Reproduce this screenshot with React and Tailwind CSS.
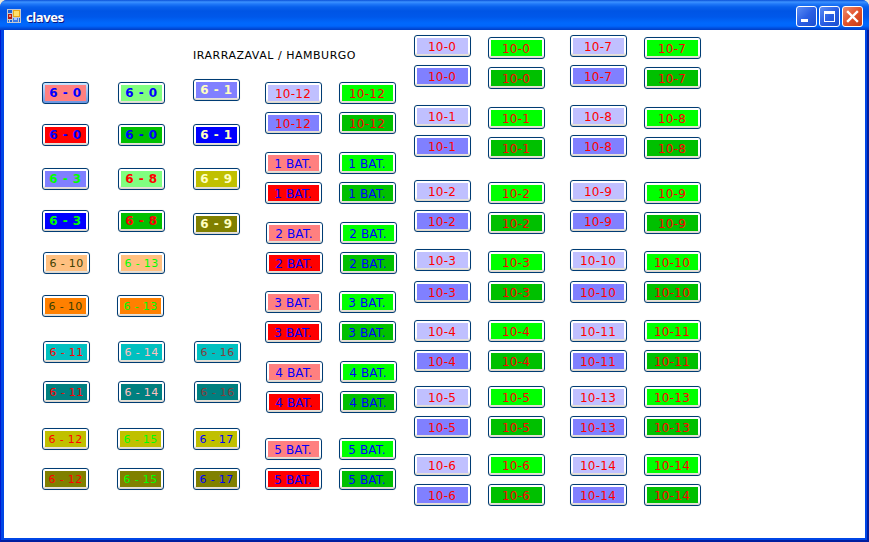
const RED = "text-[#ff0000]";
const BLUE = "text-[#0000ff]";
const LIME = "text-[#00ff00]";
const CREAM = "text-[#ffffc0]";
const OLIVE = "text-[#404000]";
const PINK = "text-[#ffc0c0]";
const BROWN = "text-[#804040]";

const SALMON_BG = "bg-[#ff8080]";
const RED_BG = "bg-[#ff0000]";
const LIME_BG = "bg-[#00ff00]";
const GREEN_BG = "bg-[#00c000]";
const MINT_BG = "bg-[#80ff80]";
const LAVENDER_BG = "bg-[#c0c0ff]";
const PERI_BG = "bg-[#8080ff]";
const BLUE_BG = "bg-[#0000ff]";
const MUSTARD_BG = "bg-[#c0c000]";
const OLIVE_BG = "bg-[#808000]";
const PEACH_BG = "bg-[#ffc080]";
const ORANGE_BG = "bg-[#ff8000]";
const CYAN_BG = "bg-[#00c0c0]";
const TEAL_BG = "bg-[#008080]";

const BOLD = "w-[47px] text-[12px] font-bold tracking-[0.45px]";
const SMALL = "w-[47px] text-[11px] tracking-[0.35px]";
const CODE = "w-[57px] text-[12px] tracking-[0.25px] *:pt-[2px] *:pr-px";
const BAT = "w-[57px] text-[12px] tracking-[0.1px] *:pt-[2px] *:pr-px";

// Each entry: label, size style, fill, text colour, spacing
const first = [
  ["6 - 0", BOLD, SALMON_BG, BLUE, "mt-[3px]", true],
  ["6 - 0", BOLD, RED_BG, BLUE, "mt-5"],
  ["6 - 3", BOLD, PERI_BG, LIME, "mt-[22px]"],
  ["6 - 3", BOLD, BLUE_BG, LIME, "mt-5"],
  ["6 - 10", SMALL, PEACH_BG, OLIVE, "mt-5 ml-px"],
  ["6 - 10", SMALL, ORANGE_BG, OLIVE, "mt-[21px]"],
  ["6 - 11", SMALL, CYAN_BG, RED, "mt-6 ml-px"],
  ["6 - 11", SMALL, TEAL_BG, RED, "mt-[18px] ml-px"],
  ["6 - 12", SMALL, MUSTARD_BG, RED, "mt-[25px]"],
  ["6 - 12", SMALL, OLIVE_BG, RED, "mt-[18px]"],
];

const second = [
  ["6 - 0", BOLD, MINT_BG, BLUE, "mt-[3px] ml-px"],
  ["6 - 0", BOLD, GREEN_BG, BLUE, "mt-5 ml-px"],
  ["6 - 8", BOLD, MINT_BG, RED, "mt-[22px] ml-px"],
  ["6 - 8", BOLD, GREEN_BG, RED, "mt-5 ml-px"],
  ["6 - 13", SMALL, PEACH_BG, LIME, "mt-5 ml-px"],
  ["6 - 13", SMALL, ORANGE_BG, LIME, "mt-[21px]"],
  ["6 - 14", SMALL, CYAN_BG, PINK, "mt-6 ml-px"],
  ["6 - 14", SMALL, TEAL_BG, PINK, "mt-[18px] ml-px"],
  ["6 - 15", SMALL, MUSTARD_BG, LIME, "mt-[25px]"],
  ["6 - 15", SMALL, OLIVE_BG, LIME, "mt-[18px]"],
];

const third = [
  ["6 - 1", BOLD, PERI_BG, CREAM, "mt-0"],
  ["6 - 1", BOLD, BLUE_BG, CREAM, "mt-[23px]"],
  ["6 - 9", BOLD, MUSTARD_BG, CREAM, "mt-[22px]"],
  ["6 - 9", BOLD, OLIVE_BG, CREAM, "mt-[23px]"],
  ["6 - 16", SMALL, CYAN_BG, BROWN, "mt-[106px] ml-px"],
  ["6 - 16", SMALL, TEAL_BG, BROWN, "mt-[18px] ml-px"],
  ["6 - 17", SMALL, MUSTARD_BG, BLUE, "mt-[25px]"],
  ["6 - 17", SMALL, OLIVE_BG, BLUE, "mt-[18px]"],
];

const batPairs = [
  ["10-12", "mt-[3px]"],
  ["1 BAT.", "mt-[18px]"],
  ["2 BAT.", "mt-[18px] ml-px"],
  ["3 BAT.", "mt-[17px]"],
  ["4 BAT.", "mt-[18px] ml-px"],
  ["5 BAT.", "mt-[25px]"],
];

function batColumn(green) {
  return batPairs.flatMap(([label, gap], i) => {
    const isCode = i === 0;
    const light = green ? LIME_BG : isCode ? LAVENDER_BG : SALMON_BG;
    const dark = green ? GREEN_BG : isCode ? PERI_BG : RED_BG;
    const ink = isCode ? RED : BLUE;
    const size = isCode ? CODE : BAT;
    return [
      [label, size, light, ink, gap],
      [label, size, dark, ink, gap.includes("ml-px") ? "mt-2 ml-px" : "mt-2"],
    ];
  });
}

const blueGaps = ["mt-[5px]", "mt-[18px]", "mt-[23px]", "mt-[17px]", "mt-[17px]", "mt-[14px]", "mt-4"];
const greenGaps = ["mt-[7px]", "mt-[18px]", "mt-[23px]", "mt-[17px]", "mt-[17px]", "mt-[14px]", "mt-4"];
const lowCodes = ["10-0", "10-1", "10-2", "10-3", "10-4", "10-5", "10-6"];
const highCodes = ["10-7", "10-8", "10-9", "10-10", "10-11", "10-13", "10-14"];

function codeColumn(codes, green) {
  return codes.flatMap((label, i) => [
    [label, CODE, green ? LIME_BG : LAVENDER_BG, RED, green ? greenGaps[i] : blueGaps[i]],
    [label, CODE, green ? GREEN_BG : PERI_BG, RED, !green && i === 3 ? "mt-[10px]" : "mt-2"],
  ]);
}

function XpButton({ item }) {
  const [label, size, fill, ink, place, focused] = item;
  const rim = focused
    ? "bg-linear-to-b from-[#cee7ff] to-[#6a94e0]"
    : "bg-linear-to-b from-white from-80% to-[#d6d0c5]";
  return (
    <button
      className={`flex h-[22px] shrink-0 rounded-[3px] border border-[#003c74] p-[2px] shadow-[0_0_1px_#d8d4c8] ${rim} ${size} ${place}`}
    >
      <span className={`flex h-4 w-full items-center justify-center whitespace-pre leading-none ${fill} ${ink}`}>
        {label}
      </span>
    </button>
  );
}

function Column({ items, className }) {
  return (
    <div className={`flex shrink-0 flex-col items-start ${className}`}>
      {items.map((item, i) => (
        <XpButton key={i} item={item} />
      ))}
    </div>
  );
}

function FormIcon() {
  return (
    <svg width="14" height="14" viewBox="0 0 14 14" shapeRendering="crispEdges">
      <rect width="14" height="14" fill="#c4c8d0" />
      <rect x="1" y="1" width="4" height="3" fill="#1b62d8" />
      <rect x="1" y="5" width="4" height="5" fill="#b51a12" />
      <rect x="2" y="6" width="2" height="2" fill="#f0907a" />
      <rect x="6" y="1" width="7" height="7" fill="#e8a718" />
      <rect x="7" y="2" width="5" height="5" fill="#ffe06a" />
      <rect x="1" y="11" width="1" height="2" fill="#1b62d8" />
      <rect x="3" y="11" width="2" height="2" fill="#1b62d8" />
      <rect x="6" y="9" width="5" height="4" fill="#3d7ce8" />
      <rect x="7" y="9" width="3" height="2" fill="#a8c8ff" />
      <rect x="12" y="9" width="1" height="4" fill="#1b62d8" />
    </svg>
  );
}

const blueControl =
  "flex size-[21px] rounded-[3px] border border-white bg-linear-to-br from-[#5c8cf4] via-[#2b5fe4] to-[#1c4fd0]";

export default function App() {
  return (
    <div className="h-[542px] w-[869px] overflow-hidden bg-[#ece9d8] font-['DejaVu_Sans',Verdana,sans-serif]">
      <div className="flex h-full w-full flex-col overflow-hidden rounded-t-[7px] bg-[#0046e6]">
        <header className="flex h-[30px] shrink-0 items-start bg-[linear-gradient(to_bottom,#0a50d8_0px,#3c92ff_2px,#2078f8_4px,#0860ec_7px,#0055e5_11px,#0058ea_17px,#0068fc_23px,#0066fc_26px,#0050e0_28px,#003dc4_30px)] pl-[7px] pr-[6px]">
          <div className="mt-[9px]">
            <FormIcon />
          </div>
          <h1 className="ml-[5px] mt-[9px] font-['Open_Sans',sans-serif] text-[13px] font-bold leading-4 tracking-[-0.4px] text-white [text-shadow:1px_1px_#0a1883]">
            claves
          </h1>
          <div className="ml-auto mt-[6px] flex gap-[2px]">
            <button className={blueControl} aria-label="Minimizar">
              <svg width="19" height="19" shapeRendering="crispEdges">
                <rect x="4" y="12" width="7" height="3" fill="white" />
              </svg>
            </button>
            <button className={blueControl} aria-label="Maximizar">
              <svg width="19" height="19" shapeRendering="crispEdges">
                <path d="M4 4H15V15H4ZM5 7V14H14V7Z" fill="white" fillRule="evenodd" />
              </svg>
            </button>
            <button
              className="flex size-[21px] rounded-[3px] border border-white bg-linear-to-br from-[#ee8a6c] via-[#e2512a] to-[#c83a12]"
              aria-label="Cerrar"
            >
              <svg width="19" height="19">
                <path d="M5 5L14 14M14 5L5 14" stroke="white" strokeWidth="2.4" strokeLinecap="square" />
              </svg>
            </button>
          </div>
        </header>

        <div className="flex min-h-0 flex-1 border-b-2 border-l border-r-2 border-l-[#0019cf] border-r-[#001ea0] border-b-[#001ea0]">
          <main className="mb-[2px] ml-[3px] mr-[2px] flex flex-1 items-start overflow-hidden bg-white">
            <section className="flex w-[410px] shrink-0 flex-col">
              <div className="h-[49px] whitespace-nowrap pl-[189px] pt-[19px] text-[11px] leading-[14px] tracking-[0.52px] text-black">
                IRARRAZAVAL / HAMBURGO
              </div>
              <div className="flex items-start">
                <Column items={first} className="ml-[38px] w-[75px]" />
                <Column items={second} className="w-[76px]" />
                <Column items={third} className="w-[72px]" />
                <Column items={batColumn(false)} className="w-[74px]" />
                <Column items={batColumn(true)} className="w-[75px]" />
              </div>
            </section>
            <section className="flex items-start">
              <Column items={codeColumn(lowCodes, false)} className="w-[74px]" />
              <Column items={codeColumn(lowCodes, true)} className="w-[82px]" />
              <Column items={codeColumn(highCodes, false)} className="w-[74px]" />
              <Column items={codeColumn(highCodes, true)} className="w-[57px]" />
            </section>
          </main>
        </div>
      </div>
    </div>
  );
}
